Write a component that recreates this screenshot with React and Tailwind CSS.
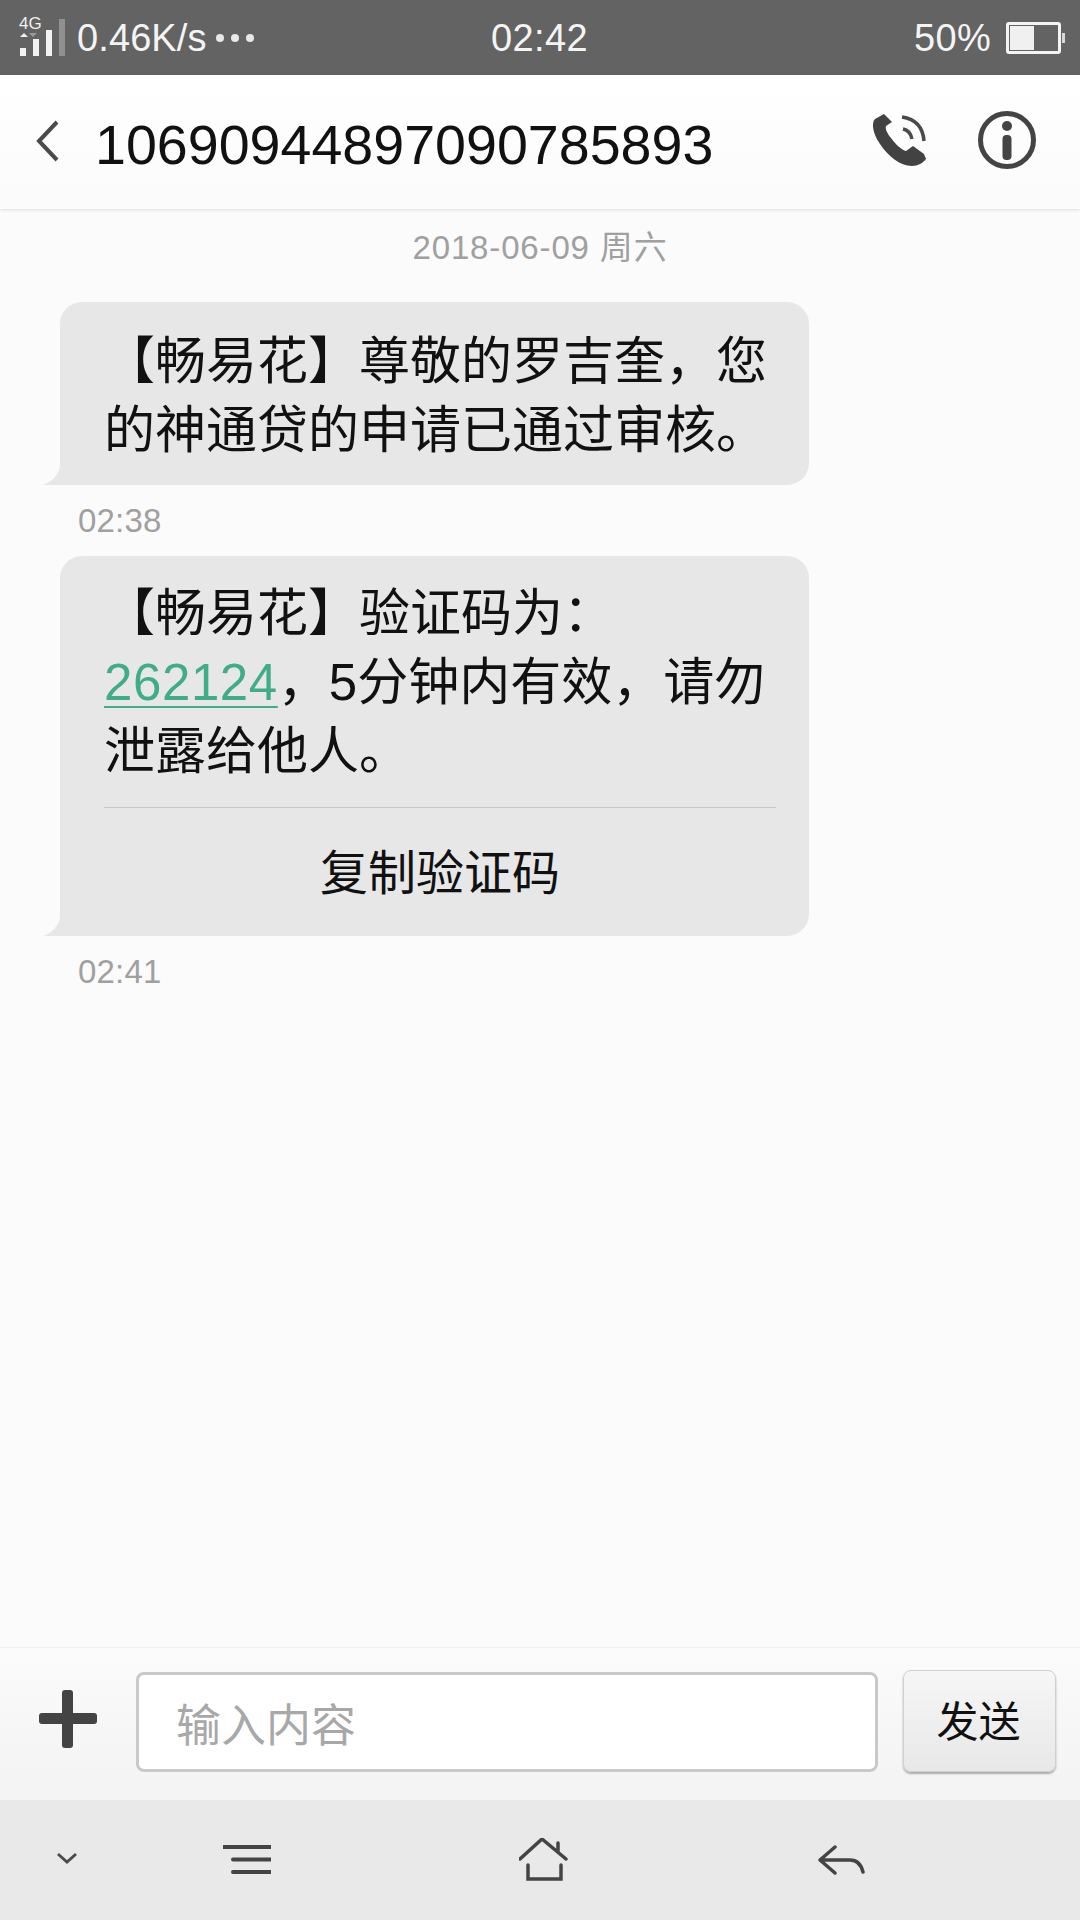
const FONT = "font-['Liberation_Sans','Noto_Sans_CJK_SC',sans-serif]";

const StatusBar = () => (
  <div className="h-[75px] bg-[#636363] flex items-center text-[#f4f4f4] relative shrink-0">
    <svg width="52" height="60" viewBox="0 0 52 60" className="ml-[15px] shrink-0">
      <text x="4" y="21" fontSize="17" fill="#f0f0f0" fontFamily="Liberation Sans">4G</text>
      <path d="M9 25L13 29H5Z" fill="#f0f0f0" />
      <path d="M14 25H22L18 29Z" fill="#999" />
      <rect x="5" y="40" width="6" height="8" fill="#f2f2f2" />
      <rect x="18" y="31" width="6" height="17" fill="#f2f2f2" />
      <rect x="31" y="22" width="6" height="26" fill="#f2f2f2" />
      <rect x="44" y="11" width="6" height="37" fill="#909090" />
    </svg>
    <span className="ml-[10px] text-[38px] leading-none tracking-[0.1px]">0.46K/s</span>
    <div className="flex gap-[7px] ml-[9px]">
      <div className="w-[8px] h-[8px] rounded-full bg-[#e8e8e8]" />
      <div className="w-[8px] h-[8px] rounded-full bg-[#e8e8e8]" />
      <div className="w-[8px] h-[8px] rounded-full bg-[#e8e8e8]" />
    </div>
    <span className="absolute left-[491px] text-[38px] tracking-[0.4px] leading-none">02:42</span>
    <span className="ml-auto text-[38px] leading-none tracking-[0.3px]">50%</span>
    <div className="ml-[15px] mr-[15px] flex items-center gap-[1px] shrink-0">
      <div className="w-[55px] h-[32px] border-[3px] border-[#f4f4f4] rounded-[3px] p-[1px]">
        <div className="w-[24px] h-full bg-[#f0f0f0]" />
      </div>
      <div className="w-[3px] h-[10px] bg-[#d8d8d8]" />
    </div>
  </div>
);

const Header = () => (
  <div className="h-[134px] shrink-0 flex items-center bg-gradient-to-b from-white to-[#fbfbfb] shadow-[0_1px_3px_rgba(0,0,0,0.12)] relative">
    <svg width="30" height="44" viewBox="0 0 30 44" className="ml-[33px] mt-[-3px] shrink-0">
      <path d="M24 3L6 22L24 41" fill="none" stroke="#4a4a4a" strokeWidth="4" />
    </svg>
    <span className="ml-[32px] text-[55.6px] leading-none text-[#111] mt-[8px]">10690944897090785893</span>
    <svg width="60" height="60" viewBox="0 0 60 60" className="ml-auto mt-[-4px] shrink-0">
      <path d="M14 4L5 9C1 13 3 24 10 34C18 46 30 56 42 56C48 56 53 53 56 49L54 44L43 36L36 41C32 40 26 35 21 28C17 23 15 19 16 16L22 12Z" fill="#424242" />
      <path d="M32 7C46 9 53 18 54 31" fill="none" stroke="#4a4a4a" strokeWidth="3.500" />
      <path d="M33 19C38 20 41 24 42 29" fill="none" stroke="#4a4a4a" strokeWidth="3.500" />
    </svg>
    <svg width="60" height="60" viewBox="0 0 60 60" className="ml-[47px] mr-[43px] mt-[-4px] shrink-0">
      <circle cx="30" cy="30" r="26.500" fill="none" stroke="#444" strokeWidth="5" />
      <circle cx="30" cy="16" r="5" fill="#444" />
      <rect x="25.500" y="25" width="9" height="25" rx="4" fill="#444" />
    </svg>
  </div>
);

const Tail = () => (
  <svg width="18" height="26" viewBox="0 0 18 26" className="absolute left-[-17px] bottom-0">
    <path d="M18 0C18 12 12 22 0 26H18Z" fill="#e7e7e7" />
  </svg>
);

const Time = ({ children, height }) => (
  <div className={`${height} flex items-center pl-[78px] text-[33px] tracking-[0.2px] leading-none text-[#a0a0a0]`}>
    {children}
  </div>
);

const Messages = () => (
  <div className="flex-1 bg-[#fbfbfb]">
    <div className="h-[77px] flex items-center justify-center text-[33px] tracking-[0.85px] leading-none text-[#a0a0a0] mb-[16px]">
      2018-06-09 周六
    </div>

    <div className="relative w-[749px] ml-[60px] bg-[#e7e7e7] rounded-[22px] rounded-bl-none pt-[25px] pb-[20px] pl-[44px] text-[51px] leading-[69px] text-[#111] whitespace-nowrap">
      <Tail />
      <div>【畅易花】尊敬的罗吉奎，您</div>
      <div>的神通贷的申请已通过审核。</div>
    </div>
    <Time height="h-[71px]">02:38</Time>

    <div className="relative w-[749px] ml-[60px] bg-[#e7e7e7] rounded-[22px] rounded-bl-none pt-[23px] pl-[44px] pr-[33px] text-[51px] leading-[69px] text-[#111] whitespace-nowrap">
      <Tail />
      <div>【畅易花】验证码为：</div>
      <div><span className="text-[#3fae86] underline decoration-[2px] underline-offset-[6px] tracking-[0.6px]">262124</span>，5分钟内有效，请勿</div>
      <div>泄露给他人。</div>
      <div className="mt-[21px] border-t border-[#c6c6c6] h-[129px] flex items-center justify-center pt-[3px] text-[48px] leading-none">
        复制验证码
      </div>
    </div>
    <Time height="h-[70px]">02:41</Time>
  </div>
);

const InputBar = () => (
  <div className="h-[153px] shrink-0 flex items-start bg-gradient-to-b from-[#fbfbfb] to-[#f3f3f3] border-t border-[#f0f0f0]">
    <svg width="58" height="58" viewBox="0 0 58 58" className="ml-[39px] mt-[42px] shrink-0">
      <rect x="23" y="0" width="11" height="58" rx="3" fill="#444" />
      <rect x="0" y="23" width="58" height="11" rx="3" fill="#444" />
    </svg>
    <div className="ml-[39px] mt-[24px] w-[742px] h-[100px] bg-white border-[3px] border-[#c9c9c9] rounded-[8px] flex items-center pl-[37px] pt-[8px] text-[45px] leading-none text-[#a8a8a8]">
      输入内容
    </div>
    <div className="ml-[25px] mt-[22px] w-[153px] h-[102px] rounded-[8px] border border-[#d0d0d0] bg-gradient-to-b from-[#f6f6f6] to-[#e8e8e8] shadow-[0_2px_2px_rgba(0,0,0,0.3)] flex items-center justify-center pt-[3px] pr-[2px] text-[42px] leading-none text-[#111]">
      发送
    </div>
  </div>
);

const NavBar = () => (
  <div className="h-[120px] shrink-0 bg-[#e9e9e9] flex items-start">
    <svg width="20" height="12" viewBox="0 0 20 12" className="ml-[57px] mt-[52px] shrink-0">
      <path d="M1 2L10 10L19 2" fill="none" stroke="#4c4c4c" strokeWidth="3" />
    </svg>
    <svg width="48" height="30" viewBox="0 0 48 30" className="ml-[146px] mt-[45px] shrink-0">
      <path d="M0 2H48M10 14.500H48M10 27H48" fill="none" stroke="#444" strokeWidth="4" strokeLinecap="round" />
    </svg>
    <svg width="50" height="44" viewBox="0 0 50 44" className="ml-[248px] mt-[38px] shrink-0">
      <path d="M1 21L23 1L47 21M39 5V14M9 27V41H42V27" fill="none" stroke="#444" strokeWidth="3.500" strokeLinecap="round" />
    </svg>
    <svg width="48" height="30" viewBox="0 0 48 30" className="ml-[249px] mt-[45px] shrink-0">
      <path d="M17 2L2 15L17 28M2 15H32C38 15 43 19 45 27" fill="none" stroke="#444" strokeWidth="3.500" strokeLinecap="round" strokeLinejoin="round" />
    </svg>
  </div>
);

export default function App() {
  return (
    <div className={`w-[1080px] h-[1920px] flex flex-col overflow-hidden ${FONT}`}>
      <StatusBar />
      <Header />
      <Messages />
      <InputBar />
      <NavBar />
    </div>
  );
}
